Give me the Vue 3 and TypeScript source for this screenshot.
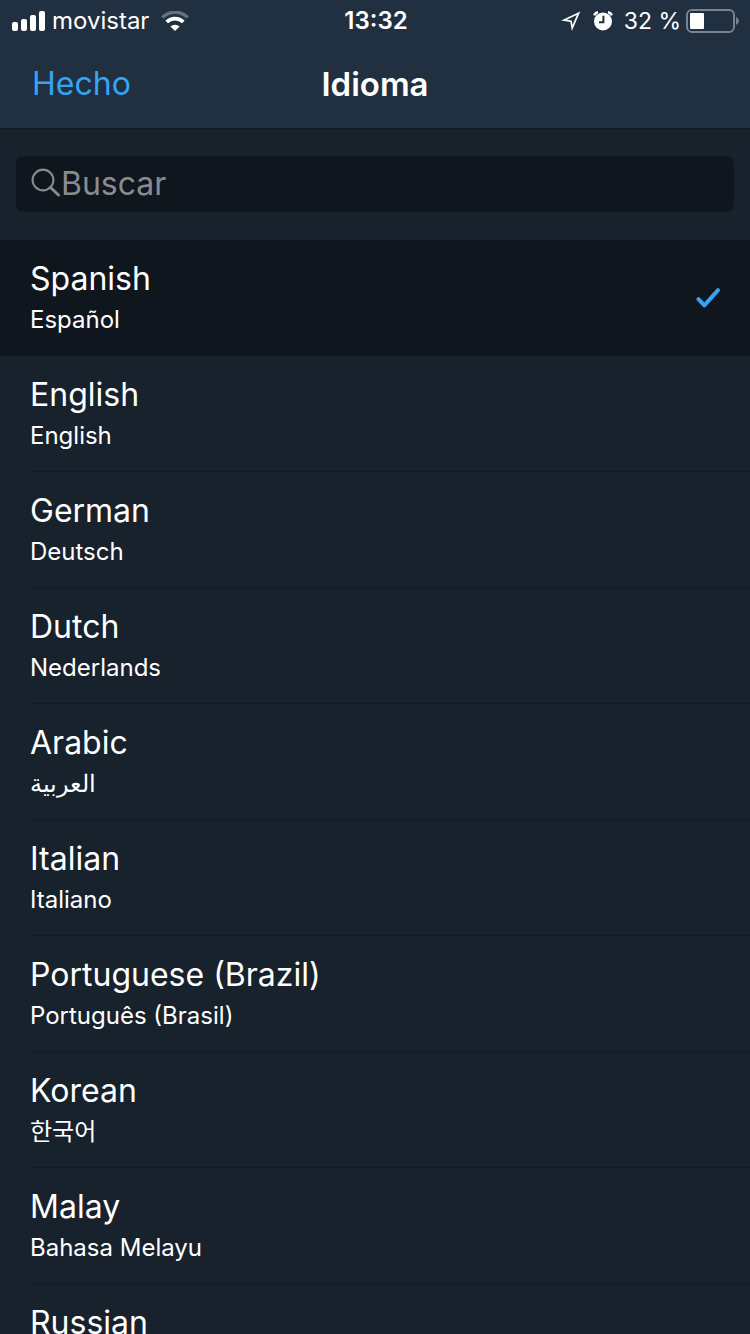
<script setup lang="ts">
import { computed, ref } from 'vue'

interface Language {
  code: string
  name: string
  nativeName: string
}

const languages: Language[] = [
  { code: 'es', name: 'Spanish', nativeName: 'Español' },
  { code: 'en', name: 'English', nativeName: 'English' },
  { code: 'de', name: 'German', nativeName: 'Deutsch' },
  { code: 'nl', name: 'Dutch', nativeName: 'Nederlands' },
  { code: 'ar', name: 'Arabic', nativeName: 'العربية' },
  { code: 'it', name: 'Italian', nativeName: 'Italiano' },
  { code: 'pt-BR', name: 'Portuguese (Brazil)', nativeName: 'Português (Brasil)' },
  { code: 'ko', name: 'Korean', nativeName: '한국어' },
  { code: 'ms', name: 'Malay', nativeName: 'Bahasa Melayu' },
  { code: 'ru', name: 'Russian', nativeName: 'Русский' },
]

const selected = ref<string>('es')
const query = ref<string>('')

const visible = computed<Language[]>(() => {
  const q = query.value.trim().toLowerCase()
  return languages.filter((l) => (l.name + ' ' + l.nativeName).toLowerCase().includes(q))
})
</script>

<template>
  <div class="screen">
    <header class="top">
      <div class="status">
        <div class="status-side">
          <svg class="signal" width="34" height="20" viewBox="0 0 34 20" fill="#fff" aria-hidden="true">
            <rect x="0" y="11" width="6" height="9" rx="2" />
            <rect x="9" y="8" width="6" height="12" rx="2" />
            <rect x="18" y="4" width="6" height="16" rx="2" />
            <rect x="27" y="0" width="6" height="20" rx="2" />
          </svg>
          <span class="carrier">movistar</span>
          <svg class="wifi" width="28" height="20" viewBox="0 0 28 20" fill="none" aria-hidden="true">
            <path d="M1.2 6.4A18.3 18.3 0 0 1 26.8 6.4" stroke="#65707d" stroke-width="3.4" />
            <path d="M5.7 11A11.7 11.7 0 0 1 22.3 11" stroke="#fff" stroke-width="3.8" />
            <path d="M14 20L9.4 15.6A6.5 6.5 0 0 1 18.6 15.6Z" fill="#fff" />
          </svg>
        </div>
        <time class="clock">13:32</time>
        <div class="status-side end">
          <svg class="arrow" width="20" height="20" viewBox="0 0 20 20" fill="none" stroke="#fff" stroke-width="1.7" stroke-linejoin="miter" aria-hidden="true">
            <path d="M17.6 2.2L3 9L10 10.2L11.2 17Z" />
          </svg>
          <svg class="alarm" width="20" height="20" viewBox="0 0 20 20" aria-hidden="true">
            <circle cx="10" cy="10.4" r="9" fill="#fff" />
            <path d="M1.2 4.4Q2.2 1.6 5 1.2M15 1.2Q17.8 1.6 18.8 4.4" fill="none" stroke="#fff" stroke-width="2.4" />
            <path d="M10.4 4.8V11.2H6" fill="none" stroke="#213040" stroke-width="2" />
          </svg>
          <span class="percent">32 %</span>
          <svg class="battery" width="54" height="24" viewBox="0 0 54 24" aria-hidden="true">
            <rect x="1" y="1" width="47" height="22" rx="5" fill="none" stroke="#79838d" stroke-width="2" />
            <rect x="4" y="4" width="14" height="16" rx="1" fill="#fff" />
            <path d="M50 8Q53 9.5 53 12T50 16Z" fill="#79838d" />
          </svg>
        </div>
      </div>
      <nav class="bar">
        <button type="button" class="done">Hecho</button>
        <h1 class="title">Idioma</h1>
      </nav>
    </header>

    <main class="content">
      <div class="search">
        <label class="field">
          <svg width="30" height="30" viewBox="0 0 30 30" fill="none" stroke="#8a8b91" aria-label="Buscar" role="img">
            <circle cx="12" cy="12" r="10.4" stroke-width="2.1" />
            <path d="M19.5 19.5L27.5 27" stroke-width="3" stroke-linecap="round" />
          </svg>
          <input v-model="query" type="text" placeholder="Buscar" />
        </label>
      </div>

      <ul class="list">
        <li v-for="lang in visible" :key="lang.code">
          <button
            type="button"
            class="row"
            :class="{ active: lang.code === selected }"
            :aria-pressed="lang.code === selected"
            @click="selected = lang.code"
          >
            <span class="labels">
              <span class="name">{{ lang.name }}</span>
              <span class="native" :lang="lang.code"><bdi>{{ lang.nativeName }}</bdi></span>
            </span>
            <svg v-if="lang.code === selected" class="check" width="26" height="22" viewBox="0 0 26 22" fill="none" stroke="#36a3f7" stroke-width="4" stroke-linecap="round" stroke-linejoin="round" aria-hidden="true">
              <path d="M3.4 12.2L9.4 18.4L23 3.2" />
            </svg>
          </button>
        </li>
      </ul>
    </main>
  </div>
</template>

<style>
body {
  margin: 0;
  background: #18222c;
}
</style>

<style scoped>
.screen {
  display: flex;
  flex-direction: column;
  height: 100vh;
  overflow: hidden;
  background: #18222c;
  color: #fff;
  font-family: Inter, "Noto Sans", "Noto Sans CJK KR", sans-serif;
}

button,
input {
  margin: 0;
  padding: 0;
  border: 0;
  background: none;
  color: inherit;
  font: inherit;
}

.top {
  flex: none;
  background: #213040;
  border-bottom: 1px solid #131a23;
}

.status {
  display: grid;
  grid-template-columns: 1fr auto 1fr;
  align-items: center;
  height: 41px;
  padding: 0 10px 0 12px;
  font-size: 24px;
  line-height: 40px;
}

.status-side {
  display: flex;
  align-items: center;
}

.end {
  justify-content: flex-end;
}

.carrier {
  margin: 0 12px 0 6px;
}

.clock {
  font-weight: 600;
}

.alarm {
  margin: 0 11px 0 12px;
}

.percent {
  margin-right: 5px;
  font-size: 23px;
}

.bar {
  display: grid;
  grid-template-columns: 1fr auto 1fr;
  align-items: center;
  box-sizing: border-box;
  height: 87px;
  padding: 0 32px 2px;
}

.done {
  justify-self: start;
  color: #36a3f7;
  font-size: 32px;
  line-height: 40px;
}

.title {
  margin: 0;
  font-size: 33px;
  font-weight: 600;
  line-height: 40px;
}

.content {
  flex: 1;
  min-height: 0;
  overflow-y: auto;
  scrollbar-width: none;
}

.search {
  padding: 27px 16px 28px;
}

.field {
  display: flex;
  align-items: center;
  box-sizing: border-box;
  height: 56px;
  padding: 0 15px 2px;
  border-radius: 8px;
  background: #10161e;
}

.field svg {
  flex: none;
}

.field input {
  flex: 1;
  min-width: 0;
  height: 40px;
  font-size: 32px;
  outline: none;
}

.field input::placeholder {
  color: #8a8b91;
  opacity: 1;
}

.list {
  margin: 0;
  padding: 0;
  list-style: none;
}

.row {
  display: flex;
  align-items: center;
  width: 100%;
  height: 116px;
  padding-left: 30px;
  text-align: left;
}

.row.active {
  background: #10161e;
}

.labels {
  flex: 1;
  display: flex;
  flex-direction: column;
  gap: 7px;
  box-sizing: border-box;
  height: 116px;
  padding-top: 19px;
  border-bottom: 1px solid #121a22;
}

.active .labels {
  border-color: transparent;
}

.name {
  font-size: 32px;
  line-height: 40px;
}

.native {
  font-size: 24px;
  line-height: 28px;
}

.check {
  margin-right: 29px;
}
</style>
